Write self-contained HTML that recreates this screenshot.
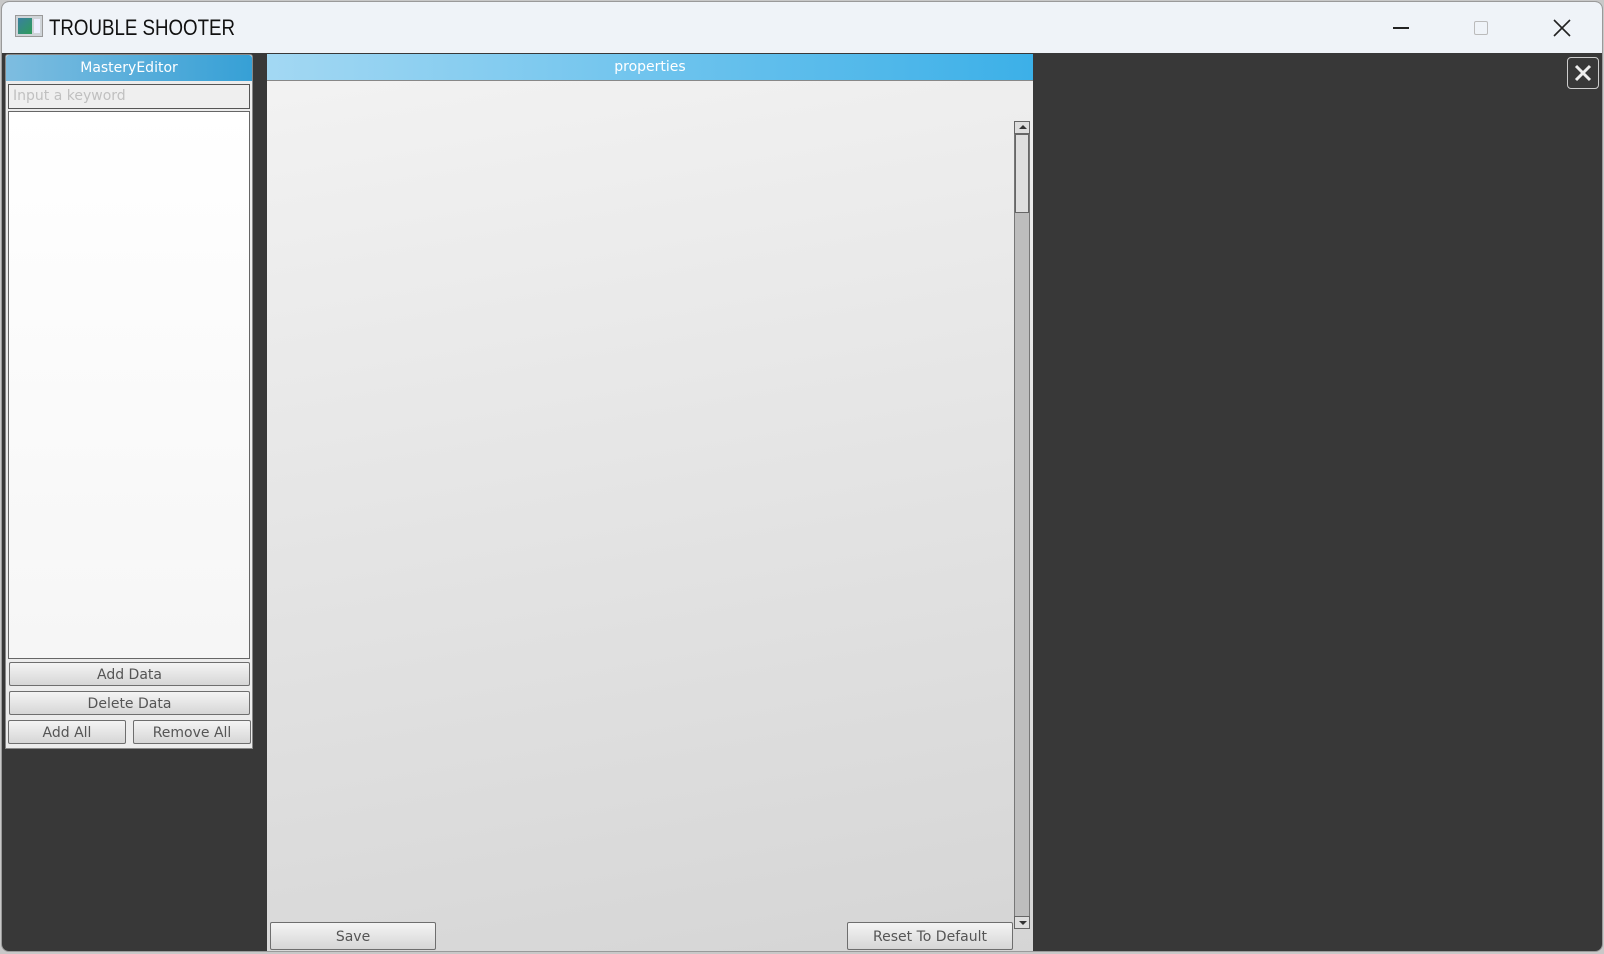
<!DOCTYPE html>
<html><head><meta charset="utf-8"><style>
*{margin:0;padding:0;box-sizing:border-box}
body{width:1604px;height:954px;background:#c8c8c8;position:relative;overflow:hidden;font-family:"DejaVu Sans","Liberation Sans",sans-serif}
.win{position:absolute;left:1px;top:1px;width:1602px;height:951px;background:#383838;border-radius:8px;overflow:hidden;border:1px solid #9a9a9a}
.title{position:absolute;left:0;top:0;right:0;height:51px;background:#eff3f8}
.abs{position:absolute}
.hdr{position:absolute;color:#fff;font-size:14px;text-align:center;line-height:26px}
.btn{position:absolute;border:1px solid #6e6e6e;border-radius:2px;background:linear-gradient(#f4f4f4,#e2e2e2 60%,#d6d6d6);color:#555;font-size:14px;text-align:center;line-height:24px}
</style></head><body>
<div class="win">
 <div class="title">
  <div class="abs" style="left:13px;top:13px;width:28px;height:22px;background:#cfd4d8;border:1px solid #999">
   <div class="abs" style="left:2px;top:2px;width:14px;height:16px;background:linear-gradient(135deg,#3a7fa0,#2e9c5a)"></div>
   <div class="abs" style="left:18px;top:3px;width:6px;height:14px;background:#eef"></div>
  </div>
  <div class="abs" style="left:47px;top:13px;font-family:'Liberation Sans',sans-serif;font-size:22px;color:#111;transform:scaleX(0.85);transform-origin:0 0">TROUBLE SHOOTER</div>
  <div class="abs" style="left:1391px;top:25px;width:16px;height:1.5px;background:#222"></div>
  <div class="abs" style="left:1472px;top:19px;width:14px;height:14px;border:1.5px solid #bbb;border-radius:2px"></div>
  <svg class="abs" style="left:1551px;top:17px" width="18" height="18"><path d="M1 1L17 17M17 1L1 17" stroke="#222" stroke-width="1.6"/></svg>
 </div>
 <div class="abs" style="left:3px;top:52px;width:248px;height:695px;background:#ececec;border:1px solid #888;border-radius:3px 3px 0 0">
  <div class="hdr" style="left:0;top:0;width:246px;height:26px;background:linear-gradient(90deg,#7ebde0,#36a0d6);border-radius:3px 3px 0 0">MasteryEditor</div>
  <div class="abs" style="left:2px;top:29px;width:242px;height:25px;background:#efefef;border:1px solid #555;color:#c0c0c0;font-size:14px;padding-left:4px;line-height:23px">Input a keyword</div>
  <div class="abs" style="left:2px;top:56px;width:242px;height:548px;background:linear-gradient(#fff,#f6f6f6);border:1px solid #666"></div>
  <div class="btn" style="left:3px;top:607px;width:241px;height:24px">Add Data</div>
  <div class="btn" style="left:3px;top:636px;width:241px;height:24px">Delete Data</div>
  <div class="btn" style="left:2px;top:665px;width:118px;height:24px">Add All</div>
  <div class="btn" style="left:127px;top:665px;width:118px;height:24px">Remove All</div>
 </div>
 <div class="abs" style="left:265px;top:52px;width:766px;height:900px;background:linear-gradient(170deg,#f3f3f3,#d5d5d5);border-radius:3px 3px 0 0">
  <div class="hdr" style="left:0;top:0;width:766px;height:27px;background:linear-gradient(90deg,#a3d8f3,#3cb0e8);border-bottom:1px solid #888">properties</div>
  <div class="abs" style="left:747px;top:67px;width:16px;height:807px;background:#bdbdbd;border:1px solid #777"></div>
  <div class="abs" style="left:747px;top:67px;width:16px;height:13px;background:#ddd;border:1px solid #666"><div class="abs" style="left:4px;top:3px;border:4px solid transparent;border-bottom:4px solid #333;border-top:0"></div></div>
  <div class="abs" style="left:748px;top:80px;width:14px;height:79px;background:#dedede;border:1px solid #666"></div>
  <div class="abs" style="left:747px;top:862px;width:16px;height:13px;background:#ddd;border:1px solid #666"><div class="abs" style="left:4px;top:4px;border:4px solid transparent;border-top:4px solid #333;border-bottom:0"></div></div>
  <div class="btn" style="left:3px;top:868px;width:166px;height:28px;line-height:28px">Save</div>
  <div class="btn" style="left:580px;top:868px;width:166px;height:28px;line-height:28px">Reset To Default</div>
 </div>
 <div class="abs" style="left:1565px;top:55px;width:32px;height:32px;border:1.5px solid #ccc;border-radius:4px">
  <svg class="abs" style="left:6px;top:6px" width="18" height="18"><path d="M2 2L16 16M16 2L2 16" stroke="#eee" stroke-width="3"/></svg>
 </div>
</div>
</body></html>
